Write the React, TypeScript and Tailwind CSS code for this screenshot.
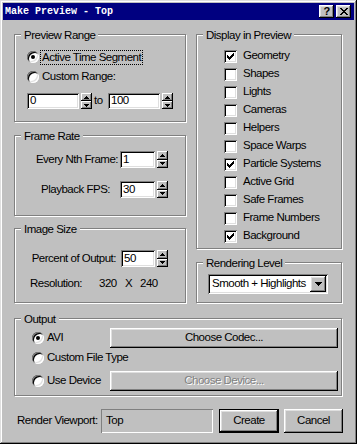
import type { ReactNode } from 'react';

const raised =
  'shadow-[inset_-1px_-1px_0_#000,inset_1px_1px_0_#fff,inset_-2px_-2px_0_#808080,inset_2px_2px_0_#dfdfdf]';
const raisedSmall = 'shadow-[inset_-1px_-1px_0_#000,inset_1px_1px_0_#fff,inset_-2px_-2px_0_#808080]';
const sunken =
  'shadow-[inset_1px_1px_0_#808080,inset_-1px_-1px_0_#fff,inset_2px_2px_0_#000,inset_-2px_-2px_0_#dfdfdf]';

const tick = ['......X', '.....XX', 'X...XXX', 'XX.XXX.', 'XXXXX..', '.XXX...', '..X....'];
const cross = ['XX....XX', '.XX..XX.', '..XXXX..', '...XX...', '..XXXX..', '.XX..XX.', 'XX....XX'];

function Pixels({ rows, dx = 0, dy = 0 }: { rows: string[]; dx?: number; dy?: number }) {
  return (
    <>
      {rows.flatMap((row, y) =>
        row
          .split('')
          .map((c, x) =>
            c === 'X' ? <rect key={`${x}-${y}`} x={x + dx} y={y + dy} width="1" height="1" fill="#000" /> : null,
          ),
      )}
    </>
  );
}

function Group({ title, className, children }: { title: string; className: string; children?: ReactNode }) {
  return (
    <div className={`relative border border-[#808080] shadow-[inset_1px_1px_0_#fff,1px_1px_0_#fff] ${className}`}>
      <span className="absolute left-[6px] top-[-7px] bg-[#c0c0c0] px-[3px] leading-[14px]">{title}</span>
      {children}
    </div>
  );
}

function Radio({ checked }: { checked?: boolean }) {
  return (
    <span
      className={`flex h-[12px] w-[12px] shrink-0 items-center justify-center rounded-full bg-white ${sunken}`}
    >
      {checked && <span className="h-[4px] w-[4px] rounded-full bg-black" />}
    </span>
  );
}

function Check({ checked }: { checked?: boolean }) {
  return (
    <span className={`flex h-[13px] w-[13px] shrink-0 bg-white ${sunken}`}>
      {checked && (
        <svg width="13" height="13">
          <Pixels rows={tick} dx={3} dy={3} />
        </svg>
      )}
    </span>
  );
}

function Spinner() {
  return (
    <span className="ml-[2px] flex h-full w-[11px] shrink-0 flex-col">
      <span className={`flex flex-1 items-center justify-center bg-[#c0c0c0] ${raisedSmall}`}>
        <svg width="5" height="3">
          <path d="M2 0h1v1h1v1h1v1H0V2h1V1h1z" />
        </svg>
      </span>
      <span className={`flex flex-1 items-center justify-center bg-[#c0c0c0] ${raisedSmall}`}>
        <svg width="5" height="3">
          <path d="M0 0h5v1H4v1H3v1H2V2H1V1H0z" />
        </svg>
      </span>
    </span>
  );
}

function Edit({ value, className }: { value: string; className: string }) {
  return (
    <span className={`flex h-full shrink-0 items-center bg-white pl-[3px] ${sunken} ${className}`}>{value}</span>
  );
}

function Button({ label, className }: { label: string; className: string }) {
  return (
    <button type="button" className={`flex items-center justify-center bg-[#c0c0c0] ${raised} ${className}`}>
      {label}
    </button>
  );
}

const display: [string, boolean][] = [
  ['Geometry', true],
  ['Shapes', false],
  ['Lights', false],
  ['Cameras', false],
  ['Helpers', false],
  ['Space Warps', false],
  ['Particle Systems', true],
  ['Active Grid', false],
  ['Safe Frames', false],
  ['Frame Numbers', false],
  ['Background', true],
];

export default function App() {
  return (
    <div className="h-[444px] w-[357px] whitespace-nowrap bg-[#c0c0c0] p-[3px] font-['Liberation_Sans',Arial,sans-serif] text-[11.5px] tracking-[-0.5px] text-black shadow-[inset_-1px_-1px_0_#000,inset_1px_1px_0_#dfdfdf,inset_-2px_-2px_0_#808080,inset_2px_2px_0_#fff]">
      <div className="flex h-[17px] items-center justify-between bg-[#000080] pl-[2px] pr-[3px]">
        <span className="font-['Liberation_Mono','Courier_New',monospace] text-[10px] font-bold tracking-normal text-white">
          Make Preview - Top
        </span>
        <div className="flex gap-[2px]">
          <span
            className={`flex h-[13px] w-[15px] items-center justify-center bg-[#c0c0c0] text-[11px] font-bold leading-none ${raised}`}
          >
            ?
          </span>
          <span className={`flex h-[13px] w-[15px] items-center justify-center bg-[#c0c0c0] ${raised}`}>
            <svg width="8" height="7">
              <Pixels rows={cross} />
            </svg>
          </span>
        </div>
      </div>

      <div className="flex flex-col pl-[11px] pt-[14px]">
        <div className="flex gap-[10px]">
          <div className="flex w-[172px] flex-col">
            <Group title="Preview Range" className="h-[88px] pl-[12px] pt-[12px]">
              <div className="flex h-[20px] items-center">
                <Radio checked />
                <span className="ml-[1px] border border-dotted border-black px-[1px] leading-[13px]">
                  Active Time Segment
                </span>
              </div>
              <div className="flex h-[20px] items-center">
                <Radio />
                <span className="ml-[3px]">Custom Range:</span>
              </div>
              <div className="mt-[6px] flex h-[16px] items-center">
                <Edit value="0" className="w-[52px]" />
                <Spinner />
                <span className="w-[16px] pl-[2px]">to</span>
                <Edit value="100" className="w-[52px]" />
                <Spinner />
              </div>
            </Group>

            <Group title="Frame Rate" className="mt-[13px] h-[81px] pt-[15px]">
              <div className="flex h-[17px] items-center">
                <span className="w-[105px] pr-[2px] text-right">Every Nth Frame:</span>
                <Edit value="1" className="w-[35px]" />
                <Spinner />
              </div>
              <div className="mt-[13px] flex h-[17px] items-center">
                <span className="w-[105px] pr-[10px] text-right">Playback FPS:</span>
                <Edit value="30" className="w-[35px]" />
                <Spinner />
              </div>
            </Group>

            <Group title="Image Size" className="mt-[12px] h-[75px] pt-[21px]">
              <div className="flex h-[17px] items-center">
                <span className="w-[106px] pr-[5px] text-right">Percent of Output:</span>
                <Edit value="50" className="w-[34px]" />
                <Spinner />
              </div>
              <div className="mt-[8px] flex h-[17px] items-center pl-[15px]">
                <span className="w-[69px]">Resolution:</span>
                <span className="w-[26px]">320</span>
                <span className="w-[15px]">X</span>
                <span>240</span>
              </div>
            </Group>
          </div>

          <div className="flex w-[146px] flex-col">
            <Group title="Display in Preview" className="h-[215px] pl-[27px] pt-[12px]">
              {display.map(([label, on]) => (
                <div key={label} className="flex h-[18px] items-center">
                  <Check checked={on} />
                  <span className="ml-[6px]">{label}</span>
                </div>
              ))}
            </Group>

            <Group title="Rendering Level" className="mt-[13px] h-[41px] pl-[11px] pt-[11px]">
              <div className={`flex h-[20px] w-[120px] items-center bg-white p-[2px] ${sunken}`}>
                <span className="flex-1 overflow-hidden pl-[2px]">Smooth + Highlights</span>
                <span className={`flex h-full w-[16px] shrink-0 items-center justify-center bg-[#c0c0c0] ${raised}`}>
                  <svg width="7" height="4">
                    <path d="M0 0h7v1H6v1H5v1H4v1H3V3H2V2H1V1H0z" />
                  </svg>
                </span>
              </div>
            </Group>
          </div>
        </div>

        <Group title="Output" className="mt-[15px] h-[78px] w-[328px] pl-[17px] pt-[9px]">
          <div className="flex h-[20px] items-center">
            <Radio checked />
            <span className="w-[66px] pl-[3px]">AVI</span>
            <Button label="Choose Codec..." className="h-[20px] w-[228px]" />
          </div>
          <div className="flex h-[20px] items-center">
            <Radio />
            <span className="pl-[3px]">Custom File Type</span>
          </div>
          <div className="mt-[3px] flex h-[20px] items-center">
            <Radio />
            <span className="w-[66px] pl-[3px]">Use Device</span>
            <button
              type="button"
              disabled
              className={`flex h-[20px] w-[228px] items-center justify-center bg-[#c0c0c0] text-[#808080] [text-shadow:1px_1px_0_#fff] ${raised}`}
            >
              Choose Device...
            </button>
          </div>
        </Group>

        <div className="mt-[13px] flex h-[24px] items-center pl-[3px]">
          <span className="w-[84px]">Render Viewport:</span>
          <span className="flex h-full w-[112px] items-center pl-[5px] shadow-[inset_1px_1px_0_#808080,inset_-1px_-1px_0_#fff]">
            Top
          </span>
          <div className="ml-[6px] h-full w-[60px] border border-black">
            <Button label="Create" className="h-full w-full" />
          </div>
          <Button label="Cancel" className="ml-[5px] h-full w-[59px]" />
        </div>
      </div>
    </div>
  );
}
